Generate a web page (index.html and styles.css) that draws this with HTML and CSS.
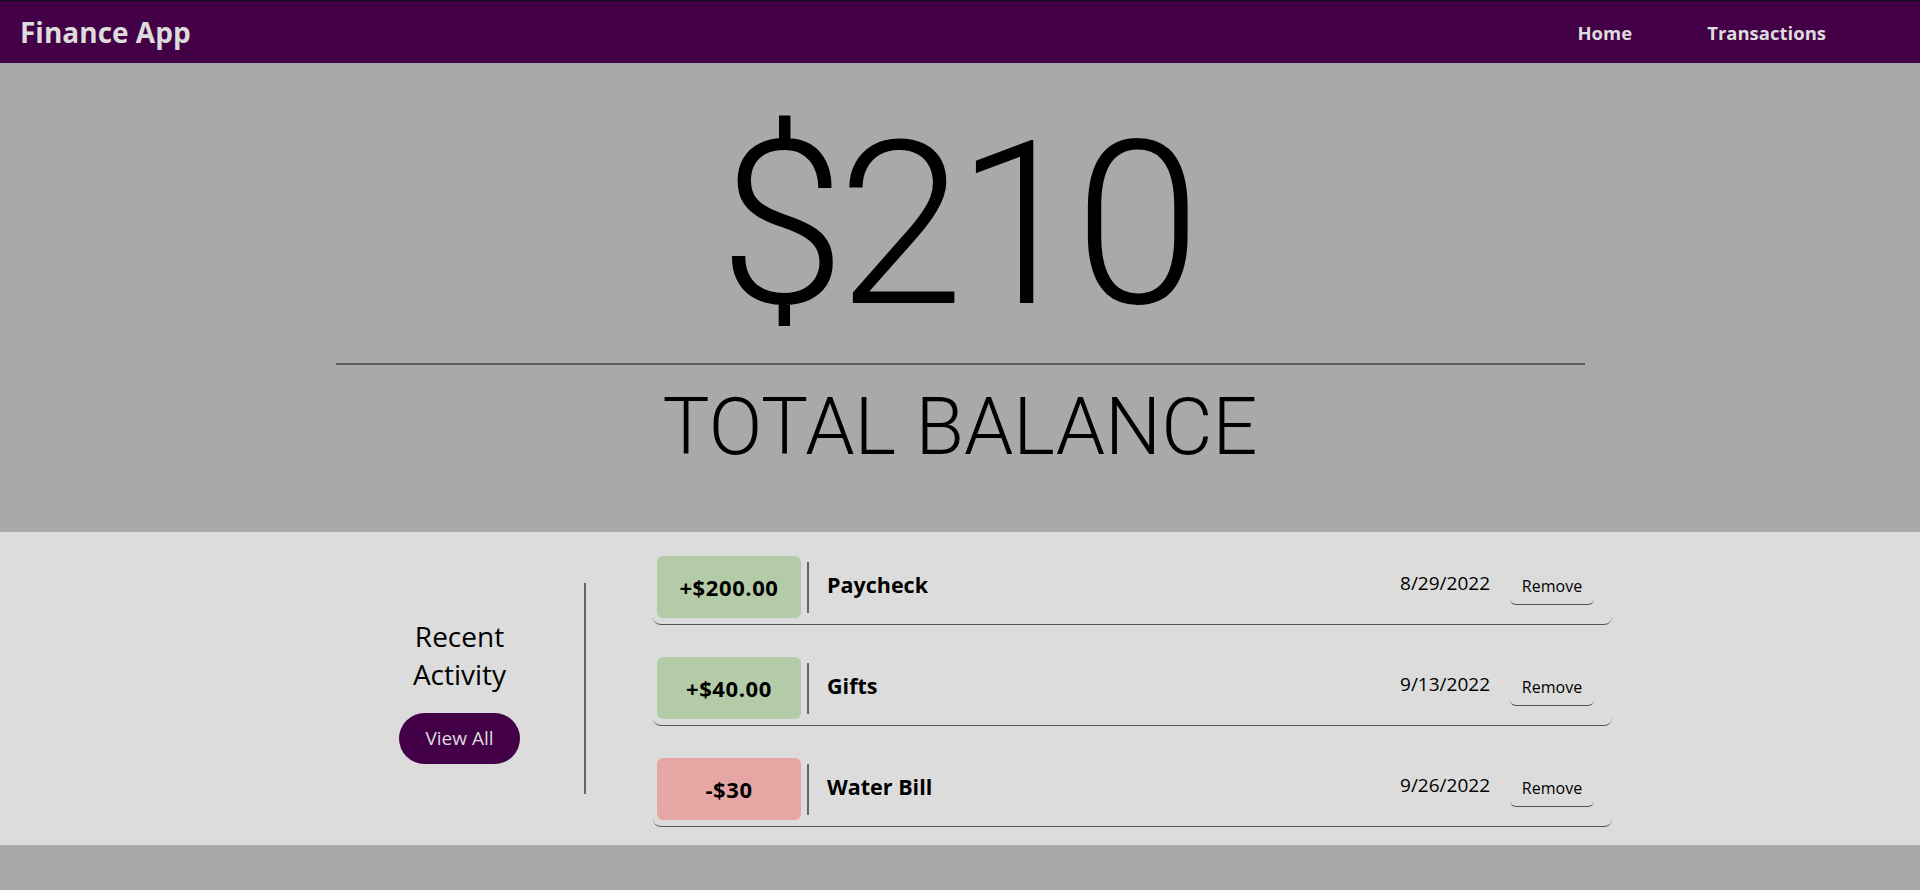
FILE: index.html
```html
<!DOCTYPE html>
<html lang="en">
<head>
<meta charset="utf-8">
<title>Finance App</title>
<link rel="stylesheet" href="styles.css">
</head>
<body>
<nav class="navbar">
  <a class="brand" href="#">Finance App</a>
  <div class="nav-links">
    <a class="nav-link" href="#">Home</a>
    <a class="nav-link" href="#">Transactions</a>
  </div>
</nav>
<header class="hero">
  <div class="balance">$210</div>
  <hr class="hero-rule">
  <div class="balance-label">TOTAL BALANCE</div>
</header>
<section class="activity">
  <div class="activity-side">
    <h2 class="activity-title">Recent Activity</h2>
    <button class="view-all">View All</button>
  </div>
  <div class="activity-divider"></div>
  <ul class="tx-list">
    <li class="tx">
      <div class="tx-amount pos">+$200.00</div>
      <div class="tx-sep"></div>
      <div class="tx-name">Paycheck</div>
      <div class="tx-date">8/29/2022</div>
      <button class="tx-remove">Remove</button>
    </li>
    <li class="tx">
      <div class="tx-amount pos">+$40.00</div>
      <div class="tx-sep"></div>
      <div class="tx-name">Gifts</div>
      <div class="tx-date">9/13/2022</div>
      <button class="tx-remove">Remove</button>
    </li>
    <li class="tx">
      <div class="tx-amount neg">-$30</div>
      <div class="tx-sep"></div>
      <div class="tx-name">Water Bill</div>
      <div class="tx-date">9/26/2022</div>
      <button class="tx-remove">Remove</button>
    </li>
  </ul>
</section>
</body>
</html>
```
FILE: styles.css
```css
* { box-sizing: border-box; }
html, body { margin: 0; padding: 0; }
body {
  background: #a9a9a9;
  font-family: "Open Sans", "Noto Sans", sans-serif;
  color: #000;
}
.navbar {
  height: 63px;
  background: #440047;
  border-top: 1px solid #111;
  display: flex;
  align-items: center;
  justify-content: space-between;
  padding: 0 0 0 20px;
}
.brand {
  color: #dcdcdc;
  text-decoration: none;
  font-weight: 700;
  font-size: 28px;
}
.nav-links {
  display: flex;
  gap: 75px;
  padding-right: 94px;
}
.nav-link {
  color: #dcdcdc;
  text-decoration: none;
  font-weight: 700;
  font-size: 18.5px;
}
.hero {
  height: 469px;
  display: flex;
  flex-direction: column;
  align-items: center;
  padding-top: 48px;
}
.balance {
  font-family: Roboto, "Open Sans", sans-serif;
  font-weight: 300;
  font-size: 228px;
  line-height: 228px;
  letter-spacing: -8px;
  margin-right: 8px;
}
.hero-rule {
  width: 1249px;
  margin: 24px 0 0;
  border: 0;
  border-top: 2px solid #5a5a5a;
  height: 0;
}
.balance-label {
  font-family: Roboto, "Open Sans", sans-serif;
  font-weight: 300;
  font-size: 79px;
  line-height: 80px;
  margin-top: 22px;
}
.activity {
  background: #dcdcdc;
  height: 313px;
  display: flex;
  align-items: center;
  padding: 21px 0 18px 335px;
}
.activity-side {
  width: 249px;
  display: flex;
  flex-direction: column;
  align-items: center;
}
.activity-title {
  margin: 0;
  width: 150px;
  text-align: center;
  font-weight: 400;
  font-size: 28px;
  line-height: 38px;
}
.view-all {
  margin-top: 20px;
  width: 121px;
  height: 51px;
  border: 0;
  border-radius: 26px;
  background: #440047;
  color: #dcdcdc;
  font-family: "Open Sans", sans-serif;
  font-size: 19px;
}
.activity-divider {
  width: 2px;
  height: 211px;
  background: #666;
  margin-top: -3px;
}
.tx-list {
  list-style: none;
  margin: 0 0 0 67px;
  padding: 0;
  width: 959px;
  display: flex;
  flex-direction: column;
  gap: 29px;
}
.tx {
  display: flex;
  align-items: center;
  padding: 3px 18px 6px 4px;
  border-bottom: 1px solid #555;
  border-radius: 8px;
}
.tx-amount {
  width: 144px;
  height: 62px;
  border-radius: 6px;
  display: flex;
  align-items: center;
  justify-content: center;
  font-weight: 700;
  font-size: 22px;
  letter-spacing: 0.6px;
}
.tx-amount.pos { background: #b3cba6; }
.tx-amount.neg { background: #e6a7a4; }
.tx-sep {
  width: 2px;
  height: 51px;
  background: #666;
  margin-left: 6px;
}
.tx-name {
  margin-left: 18px;
  margin-bottom: 5px;
  font-weight: 700;
  font-size: 21.5px;
  flex: 1;
}
.tx-date {
  font-size: 19px;
  margin-bottom: 8px;
}
.tx-remove {
  margin-left: 20px;
  margin-top: 4px;
  width: 84px;
  height: 32px;
  background: transparent;
  border: 0;
  border-bottom: 1px solid #555;
  border-radius: 6px;
  font-family: "Open Sans", sans-serif;
  font-size: 16px;
  color: #000;
  padding: 0 0 6px;
}
```
